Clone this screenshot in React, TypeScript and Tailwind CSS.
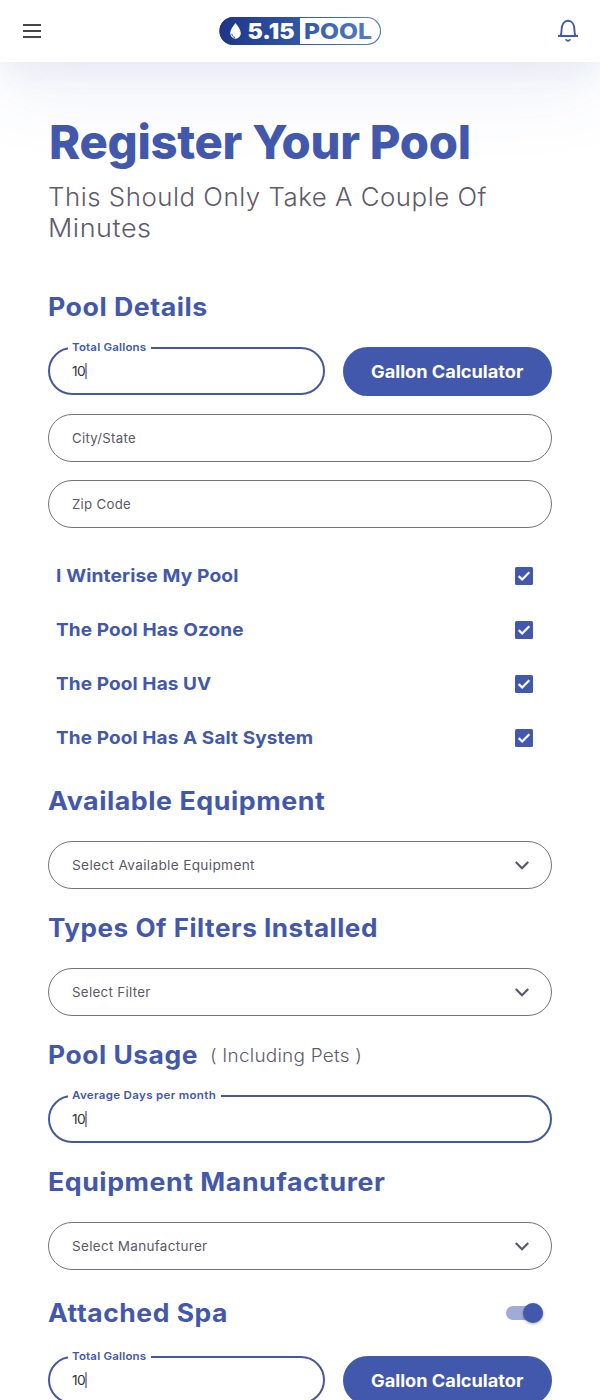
import type { ReactNode } from 'react';

function Logo() {
  return (
    <svg width="163" height="30" viewBox="0 0 163 30" role="img" aria-label="5.15 Pool">
      <defs>
        <linearGradient id="brand" x1="0" y1="0" x2="163" y2="0" gradientUnits="userSpaceOnUse">
          <stop offset="0" stopColor="#1f3587" />
          <stop offset="0.5" stopColor="#3157a8" />
          <stop offset="1" stopColor="#5a83c5" />
        </linearGradient>
      </defs>
      <rect x="1" y="1.5" width="160.500" height="27" rx="13.5" fill="#fff" stroke="url(#brand)" strokeWidth="1.200" />
      <path d="M81 1H14.500a14 14 0 0 0 0 28H81z" fill="url(#brand)" />
      <path d="M16.500 7c2.500 3.300 5.300 6.800 5.300 10.200a5.300 5.500 0 0 1-10.600 0C11.200 13.800 14 10.300 16.500 7z" fill="#fff" />
      <path d="M12.800 17.800c.2 2 1.400 3.300 3.300 3.700" fill="none" stroke="#2d4c9c" strokeWidth="1" />
      <text x="28.500" y="22.500" textLength="47" lengthAdjust="spacingAndGlyphs" fill="#fff" fontFamily="Inter, sans-serif" fontWeight="900" fontSize="21">5.15</text>
      <text x="85" y="22.500" textLength="68" lengthAdjust="spacingAndGlyphs" fill="url(#brand)" fontFamily="Inter, sans-serif" fontWeight="800" fontSize="21">POOL</text>
    </svg>
  );
}

function Header() {
  return (
    <header className="relative flex h-[62px] shrink-0 items-center justify-between bg-white px-5 shadow-[0_8px_30px_rgba(66,88,200,0.08),0_24px_80px_rgba(66,88,172,0.1)]">
      <svg width="24" height="24" viewBox="0 0 24 24" fill="#47454f">
        <path d="M3 5h18v2H3zm0 6h18v2H3zm0 6h18v2H3z" />
      </svg>
      <Logo />
      <svg width="24" height="24" viewBox="0 0 24 24" fill="none" stroke="#4258ac" strokeWidth="1.900">
        <path d="M2 17h20M4.300 16.800c1.100-1.500 1.300-3.200 1.300-6.300 0-5 2.500-8.700 6.400-8.700s6.400 3.700 6.400 8.700c0 3.100.2 4.800 1.300 6.300" />
        <path d="M9.800 20.300c.4 1.100 1.100 1.500 2.200 1.500s1.800-.4 2.200-1.500" />
      </svg>
    </header>
  );
}

function Wide({ className, children }: { className: string; children: ReactNode }) {
  return <span className={`inline-block origin-left whitespace-nowrap ${className}`}>{children}</span>;
}

function Heading({ children }: { children: ReactNode }) {
  return <h2 className="text-[25px] leading-8 font-bold tracking-[0.500px] text-[#4258ac]">{children}</h2>;
}

function ActiveField({ label, notchClass, labelClass }: { label: string; notchClass: string; labelClass: string }) {
  return (
    <div className="relative flex h-12 flex-1 items-center rounded-full border-2 border-[#45589f] px-[22px]">
      <span className={`absolute -top-[10px] left-[18px] h-4 bg-white pl-1 text-[11px] leading-4 font-semibold text-[#4258ac] ${notchClass}`}>
        <Wide className={labelClass}>{label}</Wide>
      </span>
      <span className="w-[13px] pt-0.5 text-[13px] tracking-[-0.600px] text-[#333]"><Wide className="scale-x-[1.060]">10</Wide></span>
      <span className="h-4 w-[1.500px] bg-[#8995cb]" />
    </div>
  );
}

function TextField({ children }: { children: ReactNode }) {
  return (
    <div className="flex h-12 items-center rounded-full border border-[#747477] px-[23px] pt-0.5 text-[13px] tracking-[0.300px] text-[#5a5965]">{children}</div>
  );
}

function SelectField({ children }: { children: ReactNode }) {
  return (
    <div className="flex h-12 items-center justify-between rounded-full border border-[#747477] pr-[22px] pl-[23px] text-[13px] tracking-[0.300px] text-[#5a5965]">
      <span className="pt-0.5">{children}</span>
      <svg width="14" height="9" viewBox="0 0 14 9" fill="none" stroke="#5a5870" strokeWidth="2.200">
        <path d="M.8 1 7 7.200 13.200 1" />
      </svg>
    </div>
  );
}

function CheckRow({ children }: { children: ReactNode }) {
  return (
    <div className="flex h-[54px] items-center justify-between pr-[19px] pl-2 text-[18px] font-bold tracking-[0.100px] text-[#4258ac]">
      <span className="pb-0.5">{children}</span>
      <svg width="18" height="18" viewBox="0 0 18 18">
        <rect width="18" height="18" rx="1.500" fill="#4258ac" />
        <path d="m3.700 9.100 3.500 3.400 7.100-7.200" fill="none" stroke="#fff" strokeWidth="2.200" />
      </svg>
    </div>
  );
}

function GallonRow() {
  return (
    <div className="flex items-start gap-[18px]">
      <ActiveField label="Total Gallons" notchClass="w-[83px]" labelClass="tracking-[0.180px] scale-x-[1.045]" />
      <button className="h-[49px] w-[209px] rounded-full bg-[#4258ac] pt-0.5 text-[17px] font-bold text-white">
        <span className="inline-block scale-x-[1.070] whitespace-nowrap">Gallon Calculator</span>
      </button>
    </div>
  );
}

export default function App() {
  return (
    <div className="flex h-[1400px] w-[600px] flex-col overflow-hidden bg-white font-[Inter,sans-serif]">
      <Header />
      <main className="relative flex flex-col px-12 pt-[50px]">
        <h1 className="h-[60px] pl-px text-[47px] leading-[60px] font-extrabold tracking-[-0.300px] text-[#4258ac]"><Wide className="scale-x-[1.005]">Register Your Pool</Wide></h1>
        <p className="mt-[10px] flex h-[62px] flex-col items-start text-[25px] leading-[31px] font-light tracking-[0.500px] text-[#5e5b6c]">
          <Wide className="scale-x-[1.033]">This Should Only Take A Couple Of</Wide>
          <Wide className="scale-x-[1.080]">Minutes</Wide>
        </p>
        <section className="mt-[47px]">
          <Heading><Wide className="scale-x-[1.068]">Pool Details</Wide></Heading>
          <div className="mt-6 flex flex-col gap-[18px]">
            <GallonRow />
            <TextField><Wide className="scale-x-[1.015]">City/State</Wide></TextField>
            <TextField><Wide className="scale-x-[1.015]">Zip Code</Wide></TextField>
          </div>
          <div className="mt-[21px]">
            <CheckRow><Wide className="scale-x-[1.067]">I Winterise My Pool</Wide></CheckRow>
            <CheckRow><Wide className="scale-x-[1.056]">The Pool Has Ozone</Wide></CheckRow>
            <CheckRow><Wide className="scale-x-[1.055]">The Pool Has UV</Wide></CheckRow>
            <CheckRow><Wide className="scale-x-[1.054]">The Pool Has A Salt System</Wide></CheckRow>
          </div>
        </section>
        <section className="mt-5 flex flex-col gap-6">
          <Heading><Wide className="scale-x-[1.072]">Available Equipment</Wide></Heading>
          <SelectField><Wide className="scale-x-[1.052]">Select Available Equipment</Wide></SelectField>
        </section>
        <section className="mt-[23px] flex flex-col gap-6">
          <Heading><Wide className="scale-x-[1.044]">Types Of Filters Installed</Wide></Heading>
          <SelectField><Wide className="scale-x-[1.026]">Select Filter</Wide></SelectField>
        </section>
        <section className="mt-[23px] flex flex-col gap-6">
          <div className="flex items-center">
            <div className="w-[162px]"><Heading><Wide className="scale-x-[1.057]">Pool Usage</Wide></Heading></div>
            <span className="text-[18px] font-light tracking-[0.200px] text-[#5e5b6c]"><Wide className="scale-x-[1.055]">( Including Pets )</Wide></span>
          </div>
          <div className="flex"><ActiveField label="Average Days per month" notchClass="w-[153px]" labelClass="tracking-[0.300px] scale-x-[1.050]" /></div>
        </section>
        <section className="mt-[23px] flex flex-col gap-6">
          <Heading><Wide className="scale-x-[1.070]">Equipment Manufacturer</Wide></Heading>
          <SelectField><Wide className="scale-x-[1.038]">Select Manufacturer</Wide></SelectField>
        </section>
        <section className="mt-[27px]">
          <div className="mb-[27px] flex items-center justify-between pr-[9px]">
            <Heading><Wide className="scale-x-[1.060]">Attached Spa</Wide></Heading>
            <span className="flex h-[14px] w-[37px] items-center justify-end rounded-full bg-[#a0abd7]">
              <span className="size-5 rounded-full bg-[#4258ac] shadow-[0_1px_3px_rgba(0,0,0,0.35)]" />
            </span>
          </div>
          <GallonRow />
        </section>
      </main>
    </div>
  );
}
